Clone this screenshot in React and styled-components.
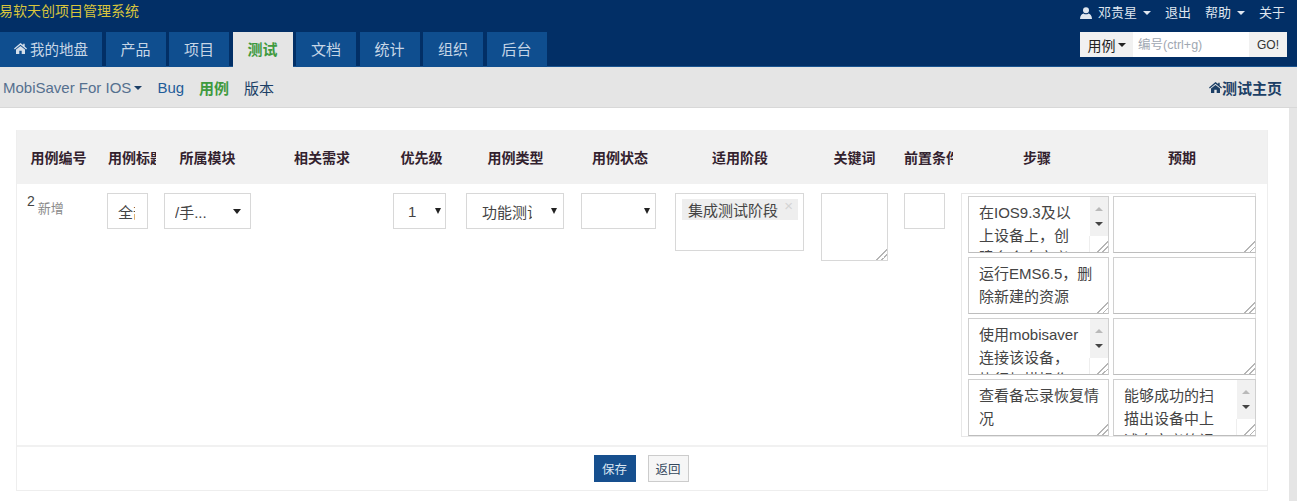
import React from "react";
import styled, { createGlobalStyle } from "styled-components";

const Global = createGlobalStyle`
  html, body { margin: 0; padding: 0; background: #fff; }
  body { font-family: "Liberation Sans", "Noto Sans CJK SC", sans-serif; font-size: 13px; color: #333; overflow: hidden; }
  * { box-sizing: border-box; }
  textarea::-webkit-resizer {
    background: linear-gradient(135deg, transparent 62%, #b5b5b5 62%, #b5b5b5 68%, transparent 68%, transparent 80%, #b5b5b5 80%, #b5b5b5 86%, transparent 86%);
  }
`;

const Page = styled.div`width: 1297px; height: 501px; display: flex; flex-direction: column; overflow: hidden;`;
const Header = styled.header`height: 67px; background: #022f66; border-bottom: 1px solid #1a5490; display: flex; flex-direction: column;`;
const TopRow = styled.div`height: 32px; display: flex; justify-content: space-between; align-items: flex-start; padding-top: 3px;`;
const Brand = styled.div`margin-left: -1px; font-size: 14px; line-height: 17px; color: #d9c53c;`;
const UserMenu = styled.div`display: flex; align-items: center; gap: 14px; padding: 1px 12px 0 0; color: #dfe6ef; font-size: 13px; line-height: 17px;`;
const UserItem = styled.span`display: inline-flex; align-items: center; gap: 6px;`;
const MenuCaret = styled.i`display: inline-block; width: 0; height: 0; margin-left: ${(p) => p.$gap ?? 0}px; border-left: 4px solid transparent; border-right: 4px solid transparent; border-top: 4px solid ${(p) => p.$color || "currentColor"};`;
const NavRow = styled.div`height: 34px; display: flex; justify-content: space-between; align-items: flex-start;`;
const Tabs = styled.nav`display: flex; gap: 3.5px; height: 34px;`;
const Tab = styled.a`
  width: ${(p) => p.$w || 60}px; height: 35px; padding-bottom: 2px; display: flex; align-items: center; justify-content: center; gap: 3px;
  font-size: ${(p) => p.$size || 15}px; background: ${(p) => (p.$active ? "#e5e5e5" : "#0f4e8f")};
  color: ${(p) => (p.$active ? "#3f9a3f" : "#c7d6e6")}; font-weight: ${(p) => (p.$active ? 700 : 400)};
  position: relative; z-index: 1;
`;
const Search = styled.div`display: flex; height: 25px; margin-right: 10px; width: 207px;`;
const SearchType = styled.div`width: 53px; background: #f1f1f1; color: #222; font-size: 14px; display: flex; align-items: center; justify-content: center; padding-top: 1px;`;
const SearchInput = styled.div`width: 116px; background: #fff; color: #9fa8b2; font-size: 12.5px; line-height: 26px; padding-left: 5px;`;
const SearchGo = styled.div`width: 38px; background: #f1f1f1; color: #333; font-size: 12px; line-height: 26px; text-align: center;`;

const SubNav = styled.div`height: 41px; background: #e5e5e5; border-bottom: 1px solid #d8d8d8; display: flex; justify-content: space-between; align-items: center; padding: 1px 15px 0 3px;`;
const SubLeft = styled.div`display: flex; align-items: center; gap: 15px; font-size: 15px; color: #1f5c99;`;
const Product = styled.span`display: inline-flex; align-items: center; color: #55708f;`;
const SubActive = styled.span`color: #3f9a3f; font-weight: 700; font-size: 15px;`;
const SubDark = styled.span`color: #1c3f66;`;
const HomeLink = styled.a`display: inline-flex; align-items: center; color: #1c3f66; font-weight: 700; font-size: 15px;`;

const Body = styled.div`flex: 1; display: flex; min-height: 0;`;
const Main = styled.main`flex: 1; background: #fff; padding: 22px 21px 10px 16px;`;
const Strip = styled.div`width: 9px; background: #e5e5e5;`;
const Card = styled.section`height: 361px; border: 1px solid #eee; border-top: 0; display: flex; flex-direction: column;`;

const Table = styled.table`table-layout: fixed; width: 1250px; border-collapse: collapse; flex: 1;`;
const Th = styled.th`height: 54px; background: #f1f1f1; color: #33222e; font-size: 14px; font-weight: 700; padding: 0 ${(p) => p.$pr ?? 8}px 0 8px; white-space: nowrap; overflow: hidden; text-align: center;`;
const Td = styled.td`vertical-align: top; padding: 9px 8px 0;`;
const IdCell = styled(Td)`padding-left: 10px; padding-top: 8px; font-size: 14px; color: #444; line-height: 18px;`;
const Added = styled.span`font-size: 13px; color: #8a8a8a; margin-left: 3px; position: relative; top: 7px;`;
const TitleCell = styled(Td)`padding-left: 7px;`;

const Field = styled.div`height: 36px; width: ${(p) => p.$w}px; border: 1px solid #d8d8d8; background: #fff; display: flex; align-items: center; padding-left: ${(p) => p.$pl ?? 15}px; padding-right: ${(p) => p.$pr ?? 11}px; font-size: 15px; color: #444; white-space: nowrap; overflow: hidden;`;
const FieldText = styled.span`flex: 1; overflow: hidden; min-width: 0;`;
const SmallCaret = styled.i`flex: none; width: 0; height: 0; margin-left: ${(p) => p.$ml ?? 4}px; border-left: ${(p) => p.$s || 3}px solid transparent; border-right: ${(p) => p.$s || 3}px solid transparent; border-top: ${(p) => (p.$s || 3) + (p.$s ? 1 : 3)}px solid #222;`;
const Chosen = styled.div`width: 129px; height: 58px; border: 1px solid #d8d8d8; padding: 5px 6px;`;
const Chip = styled.span`display: flex; align-items: center; height: 21px; width: 116px; background: #eee; font-size: 15px; color: #444; padding-left: 6px; position: relative;`;
const ChipX = styled.span`position: absolute; right: 5px; top: -2px; color: #d4d4d4; font-size: 15px;`;
const Box = styled.textarea`display: block; width: ${(p) => p.$w}px; height: ${(p) => p.$h}px; margin: 0; padding: 0; border: 1px solid #d8d8d8; outline: 0; resize: ${(p) => (p.$grip ? "vertical" : "none")}; overflow: hidden; background: #fff; border-radius: 0;`;

const Steps = styled.div`width: 295px; height: 244px; border: 1px solid #e8e8e8; padding: 2px 0 0 6px; display: grid; grid-template-columns: 141px 143px; column-gap: 4px; row-gap: 4px; grid-auto-rows: 57px;`;
const StepCell = styled.div`position: relative; height: 57px; overflow: hidden;`;
const StepArea = styled.textarea`
  display: block; width: 100%; height: 57px; margin: 0; border: 1px solid #d0d0d0; border-bottom-color: #bdbdbd; outline: 0; border-radius: 0;
  padding: 5px ${(p) => (p.$bar ? 27 : 8)}px 0 10px; font: 15px/22.5px "Liberation Sans", "Noto Sans CJK SC", sans-serif; color: #444;
  resize: vertical; overflow: hidden; background: #fff;
`;
const Bar = styled.div`position: absolute; top: 1px; right: 1px; width: 18px; height: 39px; background: #f1f1f1; display: flex; flex-direction: column; align-items: center; justify-content: space-around; padding: 4px 0;`;
const BarTrack = styled.div`position: absolute; top: 40px; right: 19px; width: 1px; height: 16px; background: #eee;`;
const ArrowUp = styled.i`width: 0; height: 0; border-left: 4px solid transparent; border-right: 4px solid transparent; border-bottom: 4px solid #b9b9b9;`;
const ArrowDown = styled.i`width: 0; height: 0; border-left: 4px solid transparent; border-right: 4px solid transparent; border-top: 4px solid #444;`;

const Footer = styled.div`height: 45px; border-top: 2px solid #f1f1f1; display: flex; justify-content: center; align-items: flex-start; gap: 12px; padding: 8px 2px 0 0;`;
const Save = styled.button`width: 42px; height: 27px; background: #164f8e; color: #dbe6f1; border: 0; font: 12.5px "Liberation Sans", "Noto Sans CJK SC", sans-serif; padding: 0;`;
const Back = styled.button`width: 41px; height: 27px; background: #f6f6f6; color: #33475c; border: 1px solid #ccc; font: 12.5px "Liberation Sans", "Noto Sans CJK SC", sans-serif; padding: 0;`;

const Home = ({ color }) => (
  <svg width="13" height="11" viewBox="0 0 13 11" fill={color}><path d="M6.5 0 0 5.6l.8.9L6.5 1.7l5.700 4.800.8-.9-2.300-2V.8H9.200v1.100zM2 6.600V11h3.300V7.800h2.400V11H11V6.600L6.500 2.900z" /></svg>
);
const User = () => (
  <svg width="12" height="12" viewBox="0 0 12 12" fill="#dfe6ef"><circle cx="6" cy="3.200" r="3" /><path d="M0 12c0-3.600 2-5.200 3.600-5.600.7.6 1.500.9 2.400.9s1.700-.3 2.400-.9C10 6.800 12 8.400 12 12z" /></svg>
);

const tabs = [["产品"], ["项目"], ["测试", true], ["文档"], ["统计"], ["组织"], ["后台"]];
const heads = ["用例编号", "用例标题", "所属模块", "相关需求", "优先级", "用例类型", "用例状态", "适用阶段", "关键词", "前置条件", "步骤"];
const widths = [83, 56, 103, 126, 73, 115, 94, 146, 83, 57, 168, 146];
const stepRows = [
  ["在IOS9.3及以上设备上，创建多个自定义备忘录", true, "", false],
  ["运行EMS6.5，删除新建的资源", false, "", false],
  ["使用mobisaver连接该设备，执行扫描操作", true, "", false],
  ["查看备忘录恢复情况", false, "能够成功的扫描出设备中上述自定义笔记", true],
];

const Scroll = () => (
  <>
    <Bar><ArrowUp /><ArrowDown /></Bar>
    <BarTrack />
  </>
);

export default function App() {
  return (
    <Page>
      <Global />
      <Header>
        <TopRow>
          <Brand>易软天创项目管理系统</Brand>
          <UserMenu>
            <UserItem><User />邓贵星<MenuCaret /></UserItem>
            <span>退出</span>
            <UserItem>帮助<MenuCaret /></UserItem>
            <span>关于</span>
          </UserMenu>
        </TopRow>
        <NavRow>
          <Tabs>
            <Tab $w={102} $size={14.5}><Home color="#d5dfea" />我的地盘</Tab>
            {tabs.map(([t, a]) => <Tab key={t} $active={a}>{t}</Tab>)}
          </Tabs>
          <Search>
            <SearchType>用例<MenuCaret $gap={2} $color="#222" /></SearchType>
            <SearchInput>编号(ctrl+g)</SearchInput>
            <SearchGo>GO!</SearchGo>
          </Search>
        </NavRow>
      </Header>
      <SubNav>
        <SubLeft>
          <Product>MobiSaver For IOS<MenuCaret $gap={3} $color="#1c3f66" /></Product>
          <span>Bug</span>
          <SubActive>用例</SubActive>
          <SubDark>版本</SubDark>
        </SubLeft>
        <HomeLink><Home color="#1c3f66" />测试主页</HomeLink>
      </SubNav>
      <Body>
        <Main>
          <Card>
            <Table>
              <colgroup>{widths.map((w, i) => <col key={i} style={{ width: w }} />)}</colgroup>
              <thead>
                <tr>
                  {heads.map((h) => <Th key={h}>{h}</Th>)}
                  <Th $pr={32}>预期</Th>
                </tr>
              </thead>
              <tbody>
                <tr>
                  <IdCell>2<Added>新增</Added></IdCell>
                  <TitleCell><Field $w={41} $pl={10} $pr={12}><FieldText>全部</FieldText></Field></TitleCell>
                  <Td><Field $w={87} $pl={10} $pr={9}><FieldText>/手...</FieldText><SmallCaret $s={4} /></Field></Td>
                  <Td />
                  <Td><Field $w={53} $pl={14} $pr={4}><FieldText>1</FieldText><SmallCaret /></Field></Td>
                  <Td><Field $w={98} $pl={15} $pr={6}><FieldText>功能测试</FieldText><SmallCaret $ml={19} /></Field></Td>
                  <Td><Field $w={75} $pr={5}><FieldText /><SmallCaret /></Field></Td>
                  <Td>
                    <Chosen><Chip>集成测试阶段<ChipX>×</ChipX></Chip></Chosen>
                  </Td>
                  <Td><Box $w={67} $h={68} $grip /></Td>
                  <Td><Box $w={41} $h={36} /></Td>
                  <Td colSpan={2}>
                    <Steps>
                      {stepRows.flatMap(([a, ab, b, bb], i) => [
                        <StepCell key={`a${i}`}><StepArea $bar={ab} defaultValue={a} />{ab && <Scroll />}</StepCell>,
                        <StepCell key={`b${i}`}><StepArea $bar={bb} defaultValue={b} />{bb && <Scroll />}</StepCell>,
                      ])}
                    </Steps>
                  </Td>
                </tr>
              </tbody>
            </Table>
            <Footer>
              <Save>保存</Save>
              <Back>返回</Back>
            </Footer>
          </Card>
        </Main>
        <Strip />
      </Body>
    </Page>
  );
}
